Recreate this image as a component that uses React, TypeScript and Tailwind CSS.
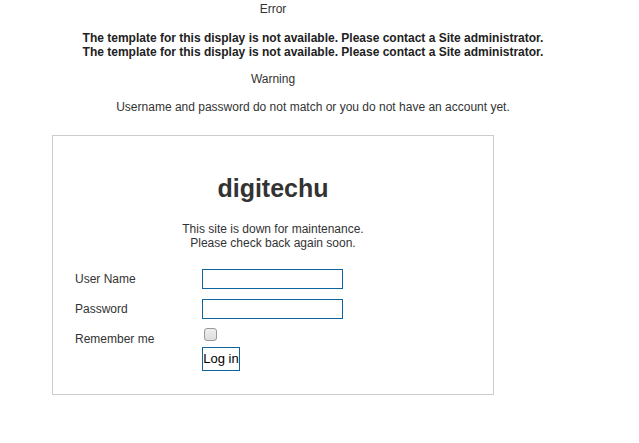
export default function App() {
  return (
    <div className="min-h-[443px] bg-white text-[12px] text-[#333]" style={{ fontFamily: '"Liberation Sans", Arial, sans-serif' }}>
      <div className="pr-[93px] pt-[2px] text-center leading-[14px]">Error</div>
      <div className="mt-[15px] pr-[13px] text-center font-bold leading-[14px] text-[#222]">
        <div>The template for this display is not available. Please contact a Site administrator.</div>
        <div>The template for this display is not available. Please contact a Site administrator.</div>
      </div>
      <div className="mt-[13px] pr-[93px] text-center leading-[14px]">Warning</div>
      <div className="mt-[14px] pr-[13px] text-center leading-[14px]">
        Username and password do not match or you do not have an account yet.
      </div>

      <div className="ml-[52px] mt-[21px] h-[260px] w-[442px] border border-[#ccc]">
        <h1 className="pt-[38px] text-center text-[25px] font-bold leading-[29px] text-[#333]">digitechu</h1>
        <div className="mt-[19px] text-center leading-[14px]">
          <div>This site is down for maintenance.</div>
          <div>Please check back again soon.</div>
        </div>

        <div className="mt-[19px] flex flex-col pl-[22px]">
          <div className="flex h-[20px] items-center">
            <label className="w-[127px]">User Name</label>
            <input type="text" className="h-[20px] w-[141px] border border-[#0f64a0] bg-white outline-none" />
          </div>
          <div className="mt-[10px] flex h-[20px] items-center">
            <label className="w-[127px]">Password</label>
            <input type="password" className="h-[20px] w-[141px] border border-[#0f64a0] bg-white outline-none" />
          </div>
          <div className="mt-[9px] flex items-start">
            <label className="w-[127px] pt-[2px]">Remember me</label>
            <div className="flex flex-col items-start">
              <span className="ml-[2px] block h-[13px] w-[13px] rounded-[3px] border border-[#999] bg-gradient-to-b from-[#eee] to-[#ddd]" />
              <button className="mt-[6px] h-[24px] w-[38px] whitespace-nowrap border border-[#0f64a0] bg-white p-0 text-[13px] leading-[20px] text-black">
                Log in
              </button>
            </div>
          </div>
        </div>
      </div>
    </div>
  );
}
